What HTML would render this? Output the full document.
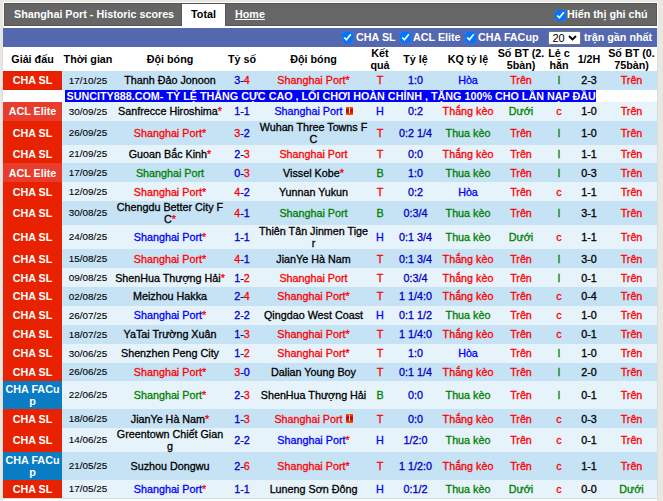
<!DOCTYPE html>
<html><head><meta charset="utf-8">
<style>
*{box-sizing:border-box}
html,body{margin:0;padding:0}
body{width:663px;height:501px;background:#e8e8e0;position:relative;overflow:hidden;font-family:"Liberation Sans",sans-serif;font-size:10.75px}
#top{position:absolute;left:3px;top:2px;width:655px;height:26px;background:#fff}
#gray{position:absolute;left:4px;top:3px;width:653px;height:23px;background:#666;border:1px solid #555;border-right:1px solid #555}
#gray .title{position:absolute;left:14px;top:0;height:23px;line-height:23px;color:#fff;font-weight:bold}
.tab{position:absolute;top:4px;height:24px;font-weight:bold}
#total{left:182px;width:43px;background:#fff;color:#000;text-align:center;line-height:22px;box-shadow:-1px 0 0 #575757,1px 0 0 #575757;height:22px}
#home{left:235px;color:#fff;text-decoration:underline;line-height:22px}
#note{position:absolute;left:555px;top:4px;height:22px;line-height:22px;color:#fff;font-weight:bold}
.cb{display:inline-block;width:11px;height:11px;background:#0b64f0;border-radius:2px;position:relative;vertical-align:middle;margin-right:2px}
.cb:after{content:"";position:absolute;left:3px;top:1px;width:3px;height:6px;border:solid #fff;border-width:0 2px 2px 0;transform:rotate(45deg)}
#blue{position:absolute;left:3px;top:28px;width:654px;height:19px;background:#5468b0;color:#fff;font-weight:bold}
#blue .it{position:absolute;top:0;line-height:19px}
#sel{position:absolute;left:548px;top:31px;width:33px;height:14px;background:#fff;border:1px solid #767676;border-radius:2px;font:11px "Liberation Sans",sans-serif;color:#000}
.ck{position:absolute;width:11px;height:11px;margin:0}
.bt{position:absolute;top:28px;line-height:19px;color:#fff;font-weight:bold}
.tt{position:absolute;top:3px;line-height:23px;color:#fff;font-weight:bold}
#tbl{position:absolute;left:3px;top:47px;width:654px;border-collapse:collapse;table-layout:fixed}
#tbl td,#tbl th{padding:0;text-align:center;vertical-align:middle;white-space:nowrap;line-height:12px;overflow:visible}
#tbl th{height:24px;font-weight:bold;line-height:12px;background:#fff;color:#000}
tr.l td{background:#e7f3fb}
tr.d td{background:#c6e2f5}
tr.ad td{background:#fff;height:12px;line-height:12px;font-weight:bold;color:#fff}
tr.ad span{background:#00f;display:inline-block;height:12px;width:531px;padding:0 0 0 1.5px;font-size:10.78px;text-align:left;margin-left:62px}
#tbl tr.ad td{text-align:left}
#tbl td.lg{color:#fff;font-weight:bold;-webkit-text-stroke-width:0}
#tbl td{-webkit-text-stroke-width:0.3px}
#tbl tr.ad td{-webkit-text-stroke-width:0}
td.sl{background:#e82200!important}
td.acl{background:#e83c2c!important}
td.fa{background:#0a7cc4!important}
#tbl td.dt{font-size:9.9px;-webkit-text-stroke-width:0.1px}
#tbl tr.h19 td{padding-bottom:2px}
#tbl tr.h19 td.dt{padding-bottom:0}
.r{color:#f00}.b{color:#00f}.g{color:#008000}.k{color:#000}.o{color:#0000cc}.sb{color:#0000cc}
.card{display:inline-block;width:7px;height:9px;background:linear-gradient(#ff6a00 0%,#d00000 35%,#d41400 65%,#ff6a00 100%);margin-left:3px;vertical-align:0;position:relative}
.card:after{content:"";position:absolute;left:3px;top:1px;bottom:2px;width:1px;background:#fff;box-shadow:0 0 0.6px rgba(255,255,255,.8)}
#bl{position:absolute;left:2px;top:47px;width:656px;height:452px;border:1px solid #dcdcdc;border-top:0}
#bw{position:absolute;left:3px;top:499px;width:654px;height:2px;background:#fff}
</style></head><body>
<div id="top"></div>
<div id="gray"></div>
<div style="position:absolute;left:0;top:3px;width:663px;height:23px">
 <div style="position:absolute;left:14px;top:0;line-height:23px;color:#fff;font-weight:bold">Shanghai Port - Historic scores</div>
 <div class="tab" id="total" style="top:1px;line-height:20px">Total</div>
 <div class="tab" id="home" style="top:0px;text-underline-offset:1px">Home</div>
 
</div>
<div id="blue"></div>
<input type="checkbox" checked class="ck" style="left:342px;top:32px">
<div class="bt" style="left:356px">CHA SL</div>
<input type="checkbox" checked class="ck" style="left:400px;top:32px">
<div class="bt" style="left:413px">ACL Elite</div>
<input type="checkbox" checked class="ck" style="left:465px;top:32px">
<div class="bt" style="left:478px">CHA FACup</div>
<div id="sel"><span style="position:absolute;left:3.5px;top:0;line-height:12px">20</span><svg style="position:absolute;left:19px;top:3px" width="9" height="6" viewBox="0 0 9 6"><path d="M1 1 L4.5 4.5 L8 1" fill="none" stroke="#000" stroke-width="1.8"/></svg></div>
<div class="bt" style="left:584px">trận gần nhất</div>
<input type="checkbox" checked class="ck" style="left:555px;top:10px"><div class="tt" style="left:567px">Hiển thị ghi chú</div>
<div id="bl"></div>
<div id="bw"></div>
<table id="tbl">
<colgroup><col style="width:59px"><col style="width:52px"><col style="width:112px"><col style="width:32px"><col style="width:111px"><col style="width:22px"><col style="width:49px"><col style="width:56px"><col style="width:50px"><col style="width:26px"><col style="width:34px"><col style="width:51px"></colgroup>
<tr><th>Giải đấu</th><th>Thời gian</th><th>Đội bóng</th><th>Tỷ số</th><th>Đội bóng</th><th>Kết<br>quả</th><th>Tỷ lệ</th><th>KQ tỷ lệ</th><th>Số BT (2.<br>5bàn)</th><th>Lẻ c<br>hẵn</th><th>1/2H</th><th>Số BT (0.<br>75bàn)</th></tr>
<tr class="d h19" style="height:19px"><td class="lg sl">CHA SL</td><td class="dt">17/10/25</td><td><span class="k">Thanh Đảo Jonoon</span></td><td><span class="sb">3-</span><span class="r">4</span></td><td><span class="r">Shanghai Port</span><span class="r">*</span></td><td class="r">T</td><td class="o">1:0</td><td class="b">Hòa</td><td class="r">Trên</td><td class="g">l</td><td class="k">2-3</td><td class="r">Trên</td></tr>
<tr class="ad"><td colspan="12"><span>SUNCITY888.COM- TỶ LỆ THẮNG CỰC CAO , LỐI CHƠI HOÀN CHỈNH , TẶNG 100% CHO LẦN NẠP ĐẦU</span></td></tr>
<tr class="l h19" style="height:19px"><td class="lg acl">ACL Elite</td><td class="dt">30/09/25</td><td><span class="k">Sanfrecce Hiroshima</span><span class="r">*</span></td><td><span class="sb">1-1</span></td><td><span class="b">Shanghai Port</span><i class="card" style="height:8px"></i></td><td class="b">H</td><td class="o">0:2</td><td class="r">Thắng kèo</td><td class="g">Dưới</td><td class="r">c</td><td class="k">1-0</td><td class="r">Trên</td></tr>
<tr class="d" style="height:24px"><td class="lg sl">CHA SL</td><td class="dt">26/09/25</td><td><span class="r">Shanghai Port</span><span class="r">*</span></td><td><span class="r">3</span><span class="sb">-2</span></td><td><span class="k">Wuhan Three Towns F<br>C</span></td><td class="r">T</td><td class="o">0:2 1/4</td><td class="g">Thua kèo</td><td class="r">Trên</td><td class="g">l</td><td class="k">1-0</td><td class="r">Trên</td></tr>
<tr class="l" style="height:18px"><td class="lg sl">CHA SL</td><td class="dt">21/09/25</td><td><span class="k">Guoan Bắc Kinh</span><span class="r">*</span></td><td><span class="sb">2-</span><span class="r">3</span></td><td><span class="r">Shanghai Port</span></td><td class="r">T</td><td class="o">0:0</td><td class="r">Thắng kèo</td><td class="r">Trên</td><td class="g">l</td><td class="k">1-1</td><td class="r">Trên</td></tr>
<tr class="d" style="height:19px"><td class="lg acl">ACL Elite</td><td class="dt">17/09/25</td><td><span class="g">Shanghai Port</span></td><td><span class="sb">0-</span><span class="r">3</span></td><td><span class="k">Vissel Kobe</span><span class="r">*</span></td><td class="g">B</td><td class="o">1:0</td><td class="g">Thua kèo</td><td class="r">Trên</td><td class="g">l</td><td class="k">0-3</td><td class="r">Trên</td></tr>
<tr class="l" style="height:19px"><td class="lg sl">CHA SL</td><td class="dt">12/09/25</td><td><span class="r">Shanghai Port</span><span class="r">*</span></td><td><span class="r">4</span><span class="sb">-2</span></td><td><span class="k">Yunnan Yukun</span></td><td class="r">T</td><td class="o">0:2</td><td class="b">Hòa</td><td class="r">Trên</td><td class="r">c</td><td class="k">1-1</td><td class="r">Trên</td></tr>
<tr class="d" style="height:24px"><td class="lg sl">CHA SL</td><td class="dt">30/08/25</td><td><span class="k">Chengdu Better City F<br>C</span><span class="r">*</span></td><td><span class="r">4</span><span class="sb">-1</span></td><td><span class="g">Shanghai Port</span></td><td class="g">B</td><td class="o">0:3/4</td><td class="g">Thua kèo</td><td class="r">Trên</td><td class="g">l</td><td class="k">3-1</td><td class="r">Trên</td></tr>
<tr class="l" style="height:24px"><td class="lg sl">CHA SL</td><td class="dt">24/08/25</td><td><span class="b">Shanghai Port</span><span class="r">*</span></td><td><span class="sb">1-1</span></td><td><span class="k">Thiên Tân Jinmen Tige<br>r</span></td><td class="b">H</td><td class="o">0:1 3/4</td><td class="g">Thua kèo</td><td class="g">Dưới</td><td class="r">c</td><td class="k">1-1</td><td class="r">Trên</td></tr>
<tr class="d" style="height:19px"><td class="lg sl">CHA SL</td><td class="dt">15/08/25</td><td><span class="r">Shanghai Port</span><span class="r">*</span></td><td><span class="r">4</span><span class="sb">-1</span></td><td><span class="k">JianYe Hà Nam</span></td><td class="r">T</td><td class="o">0:1 3/4</td><td class="r">Thắng kèo</td><td class="r">Trên</td><td class="g">l</td><td class="k">3-0</td><td class="r">Trên</td></tr>
<tr class="l" style="height:19px"><td class="lg sl">CHA SL</td><td class="dt">09/08/25</td><td><span class="k">ShenHua Thượng Hải</span><span class="r">*</span></td><td><span class="sb">1-</span><span class="r">2</span></td><td><span class="r">Shanghai Port</span></td><td class="r">T</td><td class="o">0:3/4</td><td class="r">Thắng kèo</td><td class="r">Trên</td><td class="g">l</td><td class="k">0-1</td><td class="r">Trên</td></tr>
<tr class="d h19" style="height:19px"><td class="lg sl">CHA SL</td><td class="dt">02/08/25</td><td><span class="k">Meizhou Hakka</span></td><td><span class="sb">2-</span><span class="r">4</span></td><td><span class="r">Shanghai Port</span><span class="r">*</span></td><td class="r">T</td><td class="o">1 1/4:0</td><td class="r">Thắng kèo</td><td class="r">Trên</td><td class="r">c</td><td class="k">0-4</td><td class="r">Trên</td></tr>
<tr class="l h19" style="height:19px"><td class="lg sl">CHA SL</td><td class="dt">26/07/25</td><td><span class="b">Shanghai Port</span><span class="r">*</span></td><td><span class="sb">2-2</span></td><td><span class="k">Qingdao West Coast</span></td><td class="b">H</td><td class="o">0:1 1/2</td><td class="g">Thua kèo</td><td class="r">Trên</td><td class="r">c</td><td class="k">1-0</td><td class="r">Trên</td></tr>
<tr class="d h19" style="height:19px"><td class="lg sl">CHA SL</td><td class="dt">18/07/25</td><td><span class="k">YaTai Trường Xuân</span></td><td><span class="sb">1-</span><span class="r">3</span></td><td><span class="r">Shanghai Port</span><span class="r">*</span></td><td class="r">T</td><td class="o">1 1/4:0</td><td class="r">Thắng kèo</td><td class="r">Trên</td><td class="r">c</td><td class="k">0-1</td><td class="r">Trên</td></tr>
<tr class="l h19" style="height:19px"><td class="lg sl">CHA SL</td><td class="dt">30/06/25</td><td><span class="k">Shenzhen Peng City</span></td><td><span class="sb">1-</span><span class="r">2</span></td><td><span class="r">Shanghai Port</span><span class="r">*</span></td><td class="r">T</td><td class="o">1:0</td><td class="b">Hòa</td><td class="r">Trên</td><td class="g">l</td><td class="k">1-0</td><td class="r">Trên</td></tr>
<tr class="d" style="height:18px"><td class="lg sl">CHA SL</td><td class="dt">26/06/25</td><td><span class="r">Shanghai Port</span><span class="r">*</span></td><td><span class="r">3</span><span class="sb">-0</span></td><td><span class="k">Dalian Young Boy</span></td><td class="r">T</td><td class="o">0:1 1/4</td><td class="r">Thắng kèo</td><td class="r">Trên</td><td class="g">l</td><td class="k">2-0</td><td class="r">Trên</td></tr>
<tr class="l" style="height:28px"><td class="lg fa">CHA FACu<br>p</td><td class="dt">22/06/25</td><td><span class="g">Shanghai Port</span><span class="r">*</span></td><td><span class="sb">2-</span><span class="r">3</span></td><td><span class="k">ShenHua Thượng Hải</span></td><td class="g">B</td><td class="o">0:0</td><td class="g">Thua kèo</td><td class="r">Trên</td><td class="g">l</td><td class="k">0-1</td><td class="r">Trên</td></tr>
<tr class="d" style="height:19px"><td class="lg sl">CHA SL</td><td class="dt">18/06/25</td><td><span class="k">JianYe Hà Nam</span><span class="r">*</span></td><td><span class="sb">1-</span><span class="r">3</span></td><td><span class="r">Shanghai Port</span><i class="card" style="height:9px"></i></td><td class="r">T</td><td class="o">0:0</td><td class="r">Thắng kèo</td><td class="r">Trên</td><td class="r">c</td><td class="k">0-3</td><td class="r">Trên</td></tr>
<tr class="l" style="height:24px"><td class="lg sl">CHA SL</td><td class="dt">14/06/25</td><td><span class="k">Greentown Chiết Gian<br>g</span></td><td><span class="sb">2-2</span></td><td><span class="b">Shanghai Port</span><span class="r">*</span></td><td class="b">H</td><td class="o">1/2:0</td><td class="g">Thua kèo</td><td class="r">Trên</td><td class="r">c</td><td class="k">0-1</td><td class="r">Trên</td></tr>
<tr class="d" style="height:28px"><td class="lg fa">CHA FACu<br>p</td><td class="dt">21/05/25</td><td><span class="k">Suzhou Dongwu</span></td><td><span class="sb">2-</span><span class="r">6</span></td><td><span class="r">Shanghai Port</span><span class="r">*</span></td><td class="r">T</td><td class="o">1 1/2:0</td><td class="r">Thắng kèo</td><td class="r">Trên</td><td class="r">c</td><td class="k">1-1</td><td class="r">Trên</td></tr>
<tr class="l" style="height:18px"><td class="lg sl">CHA SL</td><td class="dt">17/05/25</td><td><span class="b">Shanghai Port</span><span class="r">*</span></td><td><span class="sb">1-1</span></td><td><span class="k">Luneng Sơn Đông</span></td><td class="b">H</td><td class="o">0:1/2</td><td class="g">Thua kèo</td><td class="g">Dưới</td><td class="r">c</td><td class="k">0-0</td><td class="g">Dưới</td></tr>
</table>
</body></html>
